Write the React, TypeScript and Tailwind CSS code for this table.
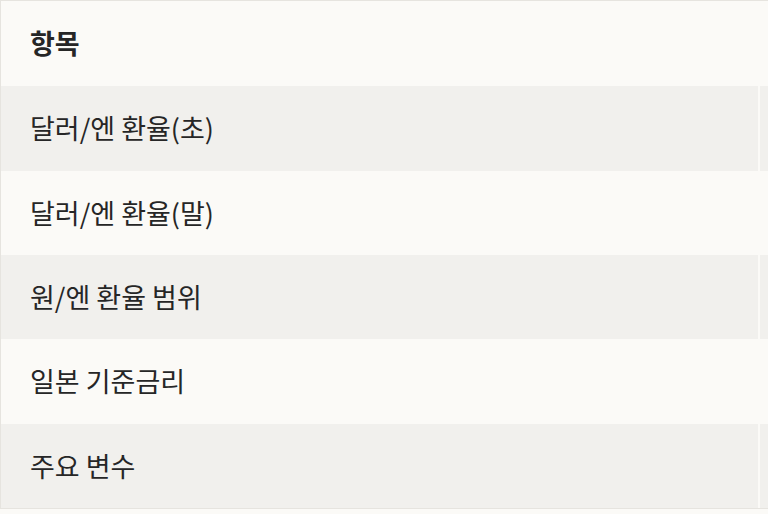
import React from "react";

const rows = [
  { label: "항목", head: true, h: "h-[85px]", bg: "bg-[#fbfaf7]" },
  { label: "달러/엔 환율(초)", h: "h-[85px]", bg: "bg-[#f1f0ed]" },
  { label: "달러/엔 환율(말)", h: "h-[84px]", bg: "bg-[#fbfaf7]" },
  { label: "원/엔 환율 범위", h: "h-[84px]", bg: "bg-[#f1f0ed]" },
  { label: "일본 기준금리", h: "h-[85px]", bg: "bg-[#fbfaf7]" },
  { label: "주요 변수", h: "h-[84px]", bg: "bg-[#f1f0ed]" },
];

export default function App() {
  return (
    <div
      className="w-[768px] h-[514px] overflow-hidden bg-[#fbfaf7] text-[#262626]"
      style={{ fontFamily: '"Noto Sans CJK KR", "Noto Sans", sans-serif' }}
    >
      <div className="border-t border-b border-l border-[#e6e4df]">
        {rows.map((r, i) => (
          <div key={i} className={`flex gap-[2px] ${r.h}`}>
            <div
              className={`w-[757px] shrink-0 flex items-center pl-[29px] text-[27px] ${r.bg} ${
                r.head ? "font-bold" : "font-normal"
              }`}
            >
              {r.label}
            </div>
            <div className={`flex-1 ${r.bg}`} />
          </div>
        ))}
      </div>
    </div>
  );
}
